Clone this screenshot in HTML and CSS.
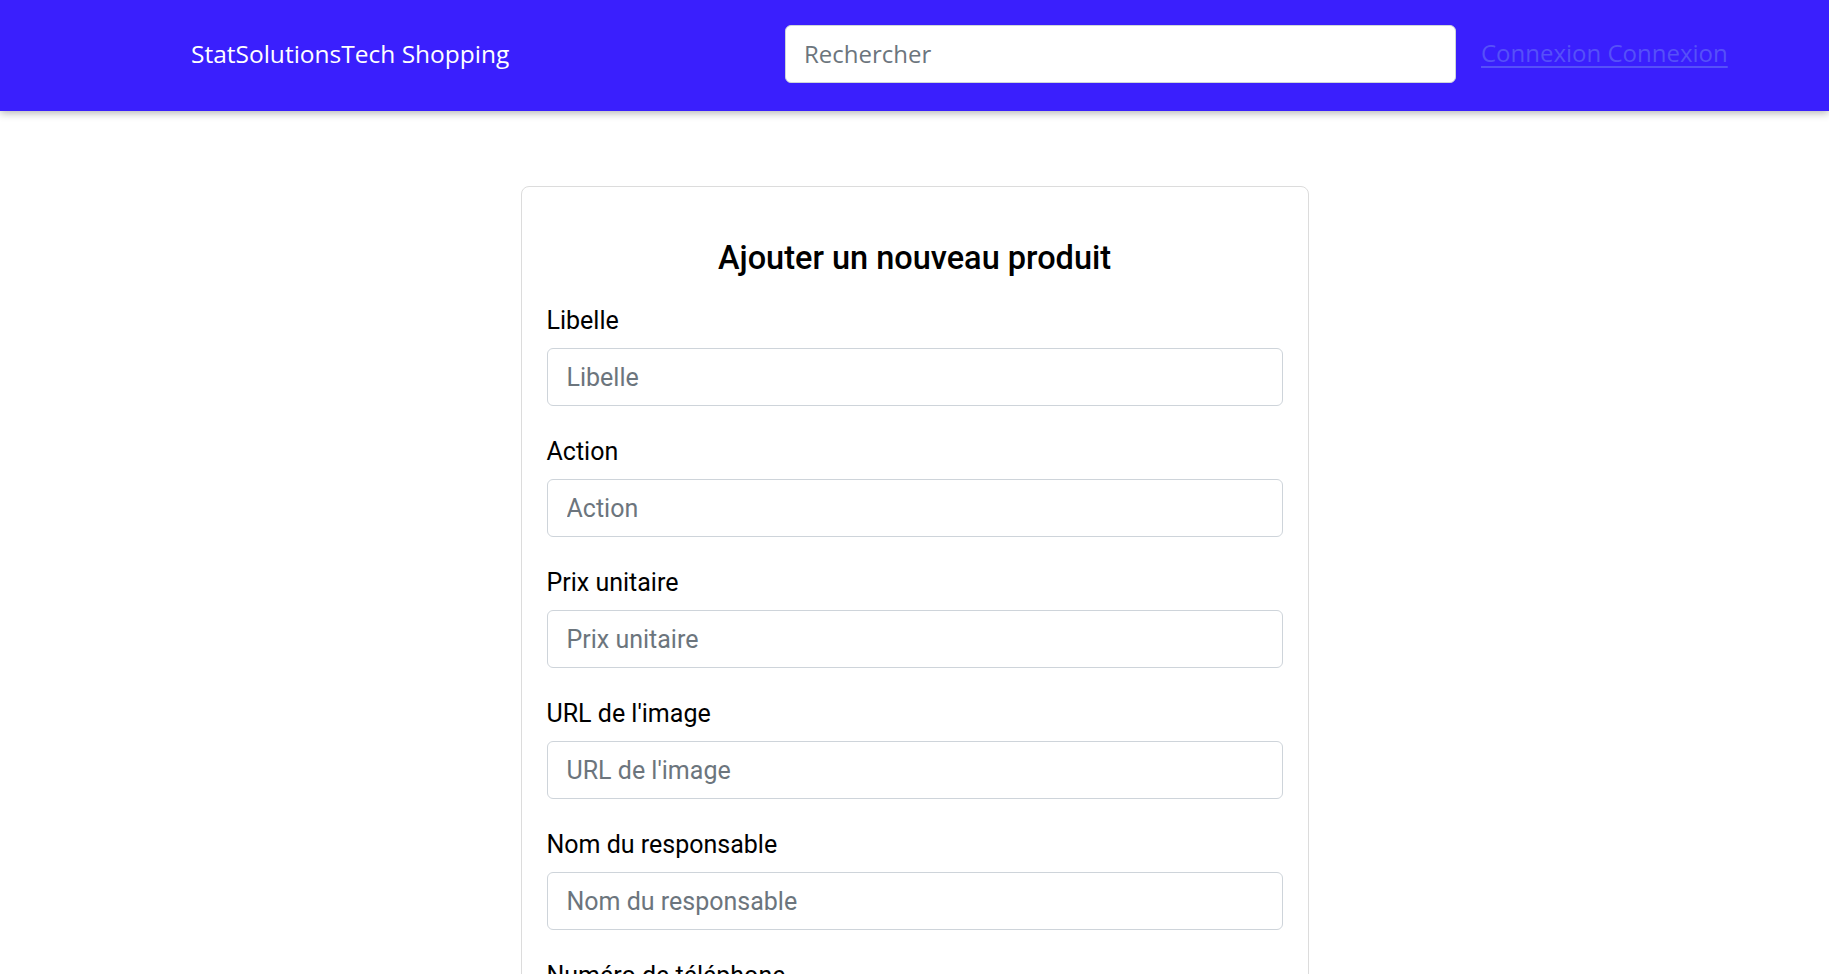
FILE: index.html
```html
<!DOCTYPE html>
<html lang="fr">
<head>
<meta charset="utf-8">
<title>Ajouter un nouveau produit</title>
<link rel="stylesheet" href="styles.css">
</head>
<body>
<header class="navbar">
  <a class="brand" href="#">StatSolutionsTech Shopping</a>
  <input class="search" type="text" placeholder="Rechercher">
  <a class="login" href="#">Connexion Connexion</a>
</header>
<main class="page">
  <form class="card">
    <h3 class="card-title">Ajouter un nouveau produit</h3>
    <div class="group">
      <label class="label">Libelle</label>
      <input class="field" type="text" placeholder="Libelle">
    </div>
    <div class="group">
      <label class="label">Action</label>
      <input class="field" type="text" placeholder="Action">
    </div>
    <div class="group">
      <label class="label">Prix unitaire</label>
      <input class="field" type="text" placeholder="Prix unitaire">
    </div>
    <div class="group">
      <label class="label">URL de l'image</label>
      <input class="field" type="text" placeholder="URL de l'image">
    </div>
    <div class="group">
      <label class="label">Nom du responsable</label>
      <input class="field" type="text" placeholder="Nom du responsable">
    </div>
    <div class="group">
      <label class="label">Numéro de téléphone</label>
      <input class="field" type="text" placeholder="Numéro de téléphone">
    </div>
    <button class="submit" type="submit">Ajouter</button>
  </form>
</main>
</body>
</html>
```
FILE: styles.css
```css
* { box-sizing: border-box; }

html, body {
  margin: 0;
  padding: 0;
  background: #ffffff;
  font-family: Roboto, "Liberation Sans", sans-serif;
  color: #000000;
}

.navbar {
  display: flex;
  align-items: center;
  background: #3a1ffd;
  height: 111px;
  padding: 0 0 3px 191px;
  box-shadow: 0 2px 8px rgba(0, 0, 0, 0.3);
  position: relative;
  z-index: 1;
  font-family: "Open Sans", "Noto Sans", sans-serif;
}

.brand {
  flex: 0 0 594px;
  color: #ffffff;
  text-decoration: none;
  font-size: 24.5px;
  line-height: 1;
}

.search {
  flex: 0 0 671px;
  height: 58px;
  border: 1px solid #ced4da;
  border-radius: 6px;
  background: #ffffff;
  padding: 0 18px 2px;
  font-family: "Open Sans", "Noto Sans", sans-serif;
  font-size: 24px;
  color: #212529;
  outline: none;
}

.search::placeholder { color: #6c757d; }

.login {
  margin-left: 25px;
  margin-bottom: 3px;
  color: #5650f8;
  font-size: 24px;
  text-decoration: underline;
  text-decoration-thickness: 2px;
  text-underline-offset: 4px;
}

.page {
  display: flex;
  justify-content: center;
  padding-top: 75px;
}

.card {
  width: 788px;
  border: 1px solid #dcdcdc;
  border-radius: 8px;
  padding: 52px 25px 40px;
  background: #ffffff;
}

.card-title {
  margin: 0 0 23px;
  text-align: center;
  font-size: 32.5px;
  font-weight: 500;
  line-height: 38px;
}

.group {
  margin-bottom: 25px;
}

.label {
  display: block;
  font-size: 25px;
  line-height: 41px;
  margin-bottom: 7px;
}

.field {
  display: block;
  width: 100%;
  height: 58px;
  border: 1px solid #ced4da;
  border-radius: 6px;
  padding: 0 19px;
  font-family: Roboto, "Liberation Sans", sans-serif;
  font-size: 25px;
  color: #212529;
  outline: none;
}

.field::placeholder { color: #6c757d; }

.submit {
  background: #0d6efd;
  color: #ffffff;
  border: none;
  border-radius: 6px;
  font-family: Roboto, sans-serif;
  font-size: 24px;
  padding: 9px 18px;
}
```
